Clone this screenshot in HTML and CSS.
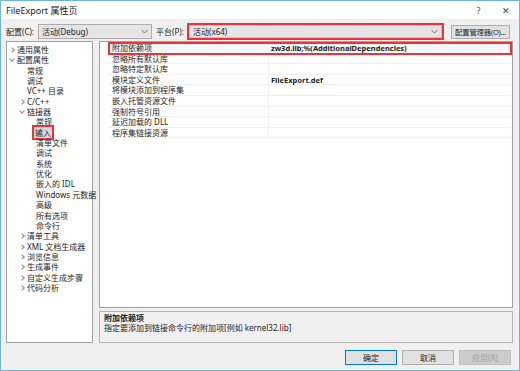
FILE: index.html
```html
<!DOCTYPE html>
<html lang="zh-CN">
	<head>
		<title>FileExport 属性页</title>
		<meta charset="utf-8">
		<link rel="stylesheet" href="styles.css">
	</head>
	<body>
		<div class="window">
			<div class="titlebar">
				<span class="title">FileExport 属性页</span>
				<span class="tbtn help">?</span>
				<span class="tbtn close">✕</span>
			</div>
			<div class="cfg">
				<span class="lbl">配置(C):</span>
				<div class="combo conf">活动(Debug)<svg class="chev" width="7" height="5" viewBox="0 0 7 5"><path d="M0.5 1 L3.5 4 L6.5 1" fill="none" stroke="#707070" stroke-width="1"/></svg></div>
				<span class="lbl plat-lbl">平台(P):</span>
				<div class="mark plat"><div class="combo">活动(x64)<svg class="chev" width="7" height="5" viewBox="0 0 7 5"><path d="M0.5 1 L3.5 4 L6.5 1" fill="none" stroke="#707070" stroke-width="1"/></svg></div></div>
				<button class="btn mgr">配置管理器(O)...</button>
			</div>
			<div class="main">
				<div class="tree">
					<div class="node l0"><i class="arr closed"></i>通用属性</div>
					<div class="node l0"><i class="arr open"></i>配置属性</div>
					<div class="node l1">常规</div>
					<div class="node l1">调试</div>
					<div class="node l1">VC++ 目录</div>
					<div class="node l1"><i class="arr closed"></i>C/C++</div>
					<div class="node l1"><i class="arr open"></i>链接器</div>
					<div class="node l2">常规</div>
					<div class="node l2"><span class="sel">输入</span></div>
					<div class="node l2">清单文件</div>
					<div class="node l2">调试</div>
					<div class="node l2">系统</div>
					<div class="node l2">优化</div>
					<div class="node l2">嵌入的 IDL</div>
					<div class="node l2">Windows 元数据</div>
					<div class="node l2">高级</div>
					<div class="node l2">所有选项</div>
					<div class="node l2">命令行</div>
					<div class="node l1"><i class="arr closed"></i>清单工具</div>
					<div class="node l1"><i class="arr closed"></i>XML 文档生成器</div>
					<div class="node l1"><i class="arr closed"></i>浏览信息</div>
					<div class="node l1"><i class="arr closed"></i>生成事件</div>
					<div class="node l1"><i class="arr closed"></i>自定义生成步骤</div>
					<div class="node l1"><i class="arr closed"></i>代码分析</div>
				</div>
				<div class="side">
					<div class="grid">
						<div class="row hl"><span class="name">附加依赖项</span><span class="val">zw3d.lib;%(AdditionalDependencies)</span></div>
						<div class="row"><span class="name">忽略所有默认库</span><span class="val"></span></div>
						<div class="row"><span class="name">忽略特定默认库</span><span class="val"></span></div>
						<div class="row"><span class="name">模块定义文件</span><span class="val">FileExport.def</span></div>
						<div class="row"><span class="name">将模块添加到程序集</span><span class="val"></span></div>
						<div class="row"><span class="name">嵌入托管资源文件</span><span class="val"></span></div>
						<div class="row"><span class="name">强制符号引用</span><span class="val"></span></div>
						<div class="row"><span class="name">延迟加载的 DLL</span><span class="val"></span></div>
						<div class="row"><span class="name">程序集链接资源</span><span class="val"></span></div>
					</div>
					<div class="desc">
						<div class="desc-title">附加依赖项</div>
						<div class="desc-text">指定要添加到链接命令行的附加项[例如 kernel32.lib]</div>
					</div>
				</div>
			</div>
			<div class="actions">
				<button class="btn ok">确定</button>
				<button class="btn">取消</button>
				<button class="btn off">应用(A)</button>
			</div>
		</div>
	</body>
</html>
```
FILE: styles.css
```css
html, body {
	margin: 0;
	padding: 0;
	background: #f0f0f0;
}
body {
	font-family: 'Noto Sans', 'Noto Sans CJK SC', sans-serif;
	font-size: 8px;
	color: #1e1e1e;
}
.window {
	width: 520px;
	height: 371px;
	box-sizing: border-box;
	border: 1px solid #6cb4ec;
	background: #f0f0f0;
	display: flex;
	flex-direction: column;
}
.titlebar {
	height: 18px;
	background: #fff;
	display: flex;
	align-items: center;
	padding-left: 5px;
}
.title {
	flex: 1;
	font-size: 9px;
	color: #222;
}
.tbtn {
	width: 27px;
	text-align: center;
	color: #444;
	font-size: 9px;
}
.cfg {
	display: flex;
	align-items: center;
	height: 17px;
	margin-top: 4px;
	padding-left: 5px;
}
.lbl {
	width: 32px;
	white-space: nowrap;
}
.plat-lbl {
	margin-left: 4px;
	width: 31px;
}
.combo {
	box-sizing: border-box;
	height: 15px;
	border: 1px solid #adadad;
	background: #e5e5e5;
	display: flex;
	align-items: center;
	padding-left: 3px;
}
.chev {
	margin-left: auto;
	margin-right: 3px;
}
.conf {
	width: 114px;
}
.mark {
	border: 2px solid #e8343c;
	box-sizing: border-box;
}
.plat {
	width: 257px;
	height: 17px;
	display: flex;
}
.plat .combo {
	flex: 1;
	height: 13px;
	border-color: #c4c4c4;
}
.btn {
	font-family: inherit;
	font-size: 8px;
	height: 15px;
	box-sizing: border-box;
	border: 1px solid #adadad;
	background: #e1e1e1;
	color: #1e1e1e;
	padding: 0;
	line-height: 12px;
	white-space: nowrap;
}
.mgr {
	width: 59px;
	height: 14px;
	margin-left: 7px;
	font-size: 7.4px;
	letter-spacing: -0.2px;
}
.main {
	display: flex;
	height: 302px;
	margin-top: 1px;
	padding-left: 5px;
}
.tree {
	width: 87px;
	box-sizing: border-box;
	border: 1px solid #a0a0a0;
	background: #fff;
	padding-top: 3px;
}
.node {
	height: 10.35px;
	line-height: 10.35px;
	white-space: nowrap;
	position: relative;
}
.l0 {
	padding-left: 10px;
}
.l1 {
	padding-left: 20px;
}
.l2 {
	padding-left: 29px;
}
.arr {
	position: absolute;
	top: 3px;
	width: 3px;
	height: 3px;
	border-right: 1px solid #8a8a8a;
	border-bottom: 1px solid #8a8a8a;
}
.l0 .arr {
	left: 3px;
}
.l1 .arr {
	left: 13px;
}
.arr.closed {
	transform: rotate(-45deg);
}
.arr.open {
	transform: rotate(45deg);
	top: 2px;
}
.sel {
	background: #d9d9d9;
	outline: 2px solid #e8343c;
	outline-offset: 0;
	padding: 0 1px;
	margin-left: -2px;
}
.side {
	flex: 1;
	display: flex;
	flex-direction: column;
	margin-left: 6px;
	margin-right: 6px;
}
.grid {
	height: 267px;
	box-sizing: border-box;
	border: 1px solid #a0a0a0;
	background: #fff;
	padding: 1px 1px 0 9px;
}
.row {
	display: flex;
	height: 10.6px;
	line-height: 10px;
	border-bottom: 1px solid #f0f0f0;
	box-sizing: border-box;
}
.name {
	width: 156px;
	padding-left: 3px;
	border-right: 1px solid #f0f0f0;
	white-space: nowrap;
}
.val {
	flex: 1;
	padding-left: 2px;
	font-weight: bold;
	font-size: 7.5px;
}
.hl {
	outline: 2px solid #e8343c;
	outline-offset: -1px;
	background: #f4f6f8;
}
.desc {
	margin-top: 3px;
	height: 32px;
	box-sizing: border-box;
	border: 1px solid #b4b4b4;
	padding: 1px 4px;
	line-height: 10px;
}
.desc-title {
	font-weight: bold;
}
.actions {
	display: flex;
	justify-content: flex-end;
	gap: 5px;
	margin-top: 7px;
	padding-right: 8px;
}
.actions .btn {
	width: 52px;
}
.ok {
	border-color: #0078d7;
}
.off {
	background: #cccccc;
	border-color: #bfbfbf;
	color: #a0a0a0;
}
```
